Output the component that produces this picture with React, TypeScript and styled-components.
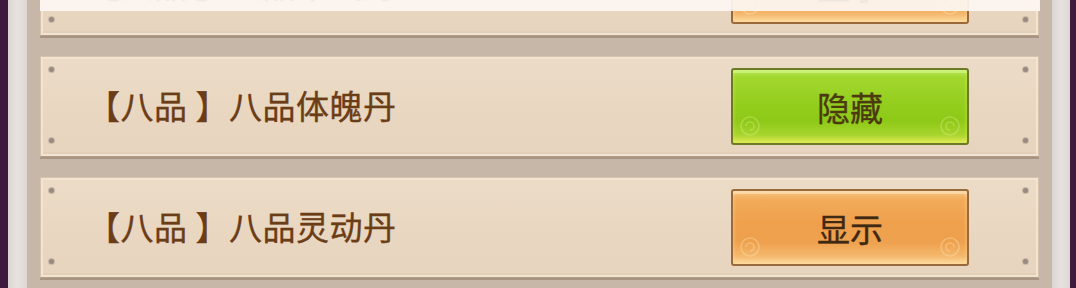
import React from "react";
import styled, { createGlobalStyle } from "styled-components";

const Global = createGlobalStyle`
  html, body { margin: 0; padding: 0; background: #3d1a3e; }
  body { width: 1076px; height: 288px; overflow: hidden; }
  #root { height: 288px; }
`;

const Frame = styled.div`
  display: flex;
  height: 288px;
  width: 1076px;
  background: #3d1a3e;
`;

const Edge = styled.div<{ $w: number }>`
  flex: 0 0 ${(p) => p.$w}px;
  background: #3d1a3e;
`;

const Strip = styled.div<{ $w: number }>`
  flex: 0 0 ${(p) => p.$w}px;
  background: linear-gradient(90deg, #dcd6d3, #e6e2df 50%, #ddd7d3);
`;

const Panel = styled.div`
  position: relative;
  flex: 1;
  background: #c7b7a9;
  overflow: hidden;
  padding: 0 13px 0 13px;
`;

const List = styled.div`
  display: flex;
  flex-direction: column;
  gap: 20px;
  margin-top: -65px;
`;

const Card = styled.div`
  position: relative;
  height: 101px;
  box-sizing: border-box;
  display: flex;
  align-items: center;
  justify-content: space-between;
  padding: 0 69px 0 46px;
  background: linear-gradient(180deg, #ecdcc7 0%, #e9d7c1 50%, #e7d4be 100%);
  border: 1px solid #d8c3aa;
  border-bottom: 1px solid #b29c84;
  box-shadow: inset 0 0 0 2px #f1e4d3, inset 0 -4px 0 #e2cfb7, 0 2px 0 #a89482;
`;

const Rivet = styled.span<{ $top?: boolean; $right?: boolean }>`
  position: absolute;
  width: 5px;
  height: 5px;
  border-radius: 50%;
  background: #978b81;
  box-shadow: 0 0 0 1px #c9b9a6;
  ${(p) => (p.$top ? "top: 10px;" : "bottom: 13px;")}
  ${(p) => (p.$right ? "right: 10px;" : "left: 8px;")}
`;

const Name = styled.div`
  font-family: "Noto Sans CJK SC", "Noto Sans", sans-serif;
  font-size: 33px;
  font-weight: 400;
  color: #6b3d17;
  -webkit-text-stroke: 0.35px #6b3d17;
  letter-spacing: 0.5px;
  white-space: pre;
  margin-top: -3px;
`;

const Btn = styled.div<{ $kind: "green" | "orange" }>`
  position: relative;
  width: 238px;
  height: 77px;
  box-sizing: border-box;
  display: flex;
  align-items: center;
  justify-content: center;
  border-radius: 3px;
  font-family: "Noto Sans CJK SC", "Noto Sans", sans-serif;
  font-size: 33px;
  font-weight: 400;
  overflow: hidden;
  ${(p) =>
    p.$kind === "green"
      ? `
    border: 2px solid #6c7a28;
    color: #4a3a10;
    -webkit-text-stroke: 0.35px #4a3a10;
    background: linear-gradient(180deg, #b8e65a 0%, #a2d82e 10%, #94ce1e 45%, #8fc918 70%, #a6d42c 88%, #d2e24c 100%);
    box-shadow: inset 0 3px 0 rgba(220,255,150,.55), inset 0 -3px 4px rgba(230,240,90,.6);
  `
      : `
    border: 2px solid #9a6a3c;
    color: #3f2912;
    -webkit-text-stroke: 0.35px #3f2912;
    background: linear-gradient(180deg, #f7c583 0%, #f2ab5a 12%, #efa04c 45%, #eea14e 70%, #f4b66a 88%, #fad194 100%);
    box-shadow: inset 0 3px 0 rgba(255,235,200,.55), inset 0 -3px 4px rgba(255,225,160,.6);
  `}
`;

const Swirl = styled.svg<{ $right?: boolean }>`
  position: absolute;
  bottom: 4px;
  ${(p) => (p.$right ? "right: 4px;" : "left: 4px;")}
  width: 30px;
  height: 30px;
  opacity: 0.3;
`;

const Overlay = styled.div`
  position: absolute;
  top: 0;
  left: 13px;
  right: 12px;
  height: 11px;
  background: rgba(253, 246, 241, 0.93);
`;

type Row = { name: string; action: string; kind: "green" | "orange" };

const rows: Row[] = [
  { name: "【八品 】八品聚气丹", action: "显示", kind: "orange" },
  { name: "【八品 】八品体魄丹", action: "隐藏", kind: "green" },
  { name: "【八品 】八品灵动丹", action: "显示", kind: "orange" },
];

const SwirlIcon: React.FC<{ right?: boolean; color: string }> = ({ right, color }) => (
  <Swirl $right={right} viewBox="0 0 30 30">
    <g fill="none" stroke={color} strokeWidth="1.6" transform={right ? "translate(30,0) scale(-1,1)" : undefined}>
      <circle cx="13" cy="17" r="9" />
      <path d="M13 17 m-4 0 a4 4 0 1 1 4 4" />
    </g>
  </Swirl>
);

export default function App() {
  return (
    <>
      <Global />
      <Frame>
        <Edge $w={8} />
        <Strip $w={19} />
        <Panel>
          <List>
            {rows.map((r, i) => (
              <Card key={i}>
                <Rivet $top />
                <Rivet />
                <Rivet $top $right />
                <Rivet $right />
                <Name>{r.name}</Name>
                <Btn $kind={r.kind}>
                  <SwirlIcon color={r.kind === "green" ? "#e8f8a0" : "#fff0c8"} />
                  <SwirlIcon right color={r.kind === "green" ? "#e8f8a0" : "#fff0c8"} />
                  {r.action}
                </Btn>
              </Card>
            ))}
          </List>
          <Overlay />
        </Panel>
        <Strip $w={18} />
        <Edge $w={6} />
      </Frame>
    </>
  );
}
